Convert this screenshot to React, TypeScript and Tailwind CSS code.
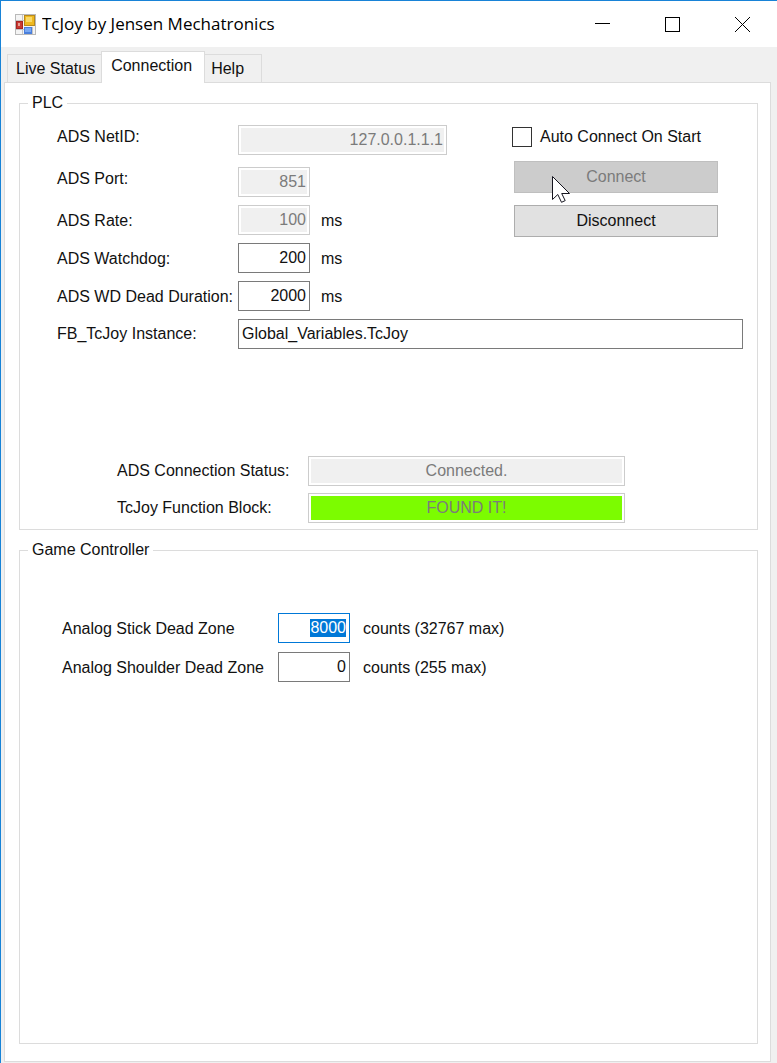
import { useEffect, useRef } from "react";
import type { InputHTMLAttributes, ReactNode, Ref } from "react";
import clsx from "clsx";

type FieldProps = InputHTMLAttributes<HTMLInputElement> & { ref?: Ref<HTMLInputElement> };

function Field({ className, ref, ...rest }: FieldProps) {
  return (
    <input
      ref={ref}
      type="text"
      className={clsx(
        "h-[30px] rounded-none border border-[#7a7a7a] bg-white px-[3px] text-base text-[#111] outline-none",
        "selection:bg-[#0078d7] selection:text-white focus:border-[#0078d7]",
        "disabled:border-[#cccccc] disabled:text-[#7b7b7b] disabled:shadow-[inset_0_0_0_2px_#ffffff]",
        className,
      )}
      {...rest}
    />
  );
}

function GroupBox({ title, className, children }: { title: string; className?: string; children: ReactNode }) {
  return (
    <fieldset className={clsx("min-w-0 border border-[#dcdcdc]", className)}>
      <legend className="ml-2 h-6 px-1 leading-6">{title}</legend>
      {children}
    </fieldset>
  );
}

type RowProps = { id: string; label: string; value: string; unit?: string; disabled?: boolean; wide?: boolean };

function PlcRow({ id, label, value, unit, disabled, wide }: RowProps) {
  return (
    <div className="flex items-center">
      <label
        htmlFor={id}
        className={clsx("w-[181px] shrink-0 whitespace-nowrap", unit ? "pt-[2px]" : "pb-[6px]")}
      >
        {label}
      </label>
      <Field
        id={id}
        defaultValue={value}
        disabled={disabled}
        className={clsx("text-right disabled:bg-[#f0f0f0]", wide ? "w-[209px]" : "w-[72px]")}
      />
      {unit && <span className="ml-[11px] pt-[2px]">{unit}</span>}
    </div>
  );
}

function AppIcon() {
  return (
    <svg width="21" height="21" viewBox="0 0 21 21" aria-hidden="true">
      <rect x="0.5" y="0.5" width="20" height="20" fill="#f4f4f4" stroke="#b9b9b9" />
      <path d="M1 6.500h8M7.500 1v19M1 15.500h8M17.500 13v7" stroke="#c4c4c4" fill="none" />
      <rect x="9" y="1" width="11" height="11" fill="#b98a1c" />
      <rect x="10" y="2" width="9" height="9" fill="#efb920" />
      <rect x="11" y="3" width="6" height="5" fill="#f9d968" />
      <rect x="1" y="7" width="7" height="8" fill="#a82424" />
      <rect x="2" y="8" width="5" height="6" fill="#c93a30" />
      <rect x="3" y="9" width="2" height="3" fill="#e8a096" />
      <rect x="9" y="13" width="8" height="7" fill="#4a7fdc" />
      <rect x="10" y="14" width="6" height="4" fill="#79a8f2" />
    </svg>
  );
}

function Pointer() {
  return (
    <svg
      className="pointer-events-none absolute left-[38px] top-[15px]"
      width="19"
      height="28"
      viewBox="0 0 19 28"
      aria-hidden="true"
    >
      <path
        d="M0.500 0.500V23.500L5.800 18.500L9.500 26.300L13.200 24.600L9.700 17.500H17.500Z"
        fill="#ffffff"
        stroke="#15151f"
      />
    </svg>
  );
}

export default function App() {
  const stick = useRef<HTMLInputElement>(null);

  useEffect(() => {
    stick.current?.focus();
    stick.current?.select();
  }, []);

  return (
    <div className="flex min-h-screen flex-col border-l border-t border-[#1883d7] bg-[#f0f0f0] pb-px font-['Liberation_Sans',Arial,sans-serif] text-base leading-5 text-[#111]">
      <header className="flex h-[46px] items-stretch bg-white">
        <div className="flex min-w-0 flex-1 items-center gap-[6px] pl-[14px]">
          <AppIcon />
          <h1 className="truncate font-['Open_Sans','Noto_Sans',sans-serif] text-[17px] leading-6 text-black">
            TcJoy by Jensen Mechatronics
          </h1>
        </div>
        <button type="button" aria-label="Minimize" className="flex w-[70px] items-center justify-center">
          <svg width="15" height="15" viewBox="0 0 15 15" fill="none" stroke="#000">
            <path d="M0 6.500H15" />
          </svg>
        </button>
        <button type="button" aria-label="Maximize" className="flex w-[70px] items-center justify-center">
          <svg width="15" height="15" viewBox="0 0 15 15" fill="none" stroke="#000">
            <rect x="0.500" y="0.500" width="14" height="14" />
          </svg>
        </button>
        <button type="button" aria-label="Close" className="flex w-[70px] items-center justify-center">
          <svg width="15" height="15" viewBox="0 0 15 15" fill="none" stroke="#000">
            <path d="M0 0L15 15M15 0L0 15" />
          </svg>
        </button>
      </header>

      <div role="tablist" className="flex items-end pl-[6px] pt-1">
        <button
          type="button"
          role="tab"
          aria-selected="false"
          className="h-7 border border-b-0 border-r-0 border-[#dcdcdc] pl-2 pr-[6px]"
        >
          Live Status
        </button>
        <button
          type="button"
          role="tab"
          aria-selected="true"
          className="relative z-10 -mb-px h-8 w-[104px] border border-b-0 border-[#dcdcdc] bg-white pb-[3px] pl-[9px] text-left"
        >
          Connection
        </button>
        <button
          type="button"
          role="tab"
          aria-selected="false"
          className="h-7 w-[57px] border border-b-0 border-l-0 border-[#dcdcdc] px-[6px] text-left"
        >
          Help
        </button>
      </div>

      <main
        role="tabpanel"
        className="ml-[3px] mr-[6px] flex flex-1 flex-col gap-2 border border-[#dcdcdc] bg-white pb-[17px] pl-[14px] pr-3 pt-2"
      >
        <GroupBox title="PLC" className="pb-[6px]">
          <div className="flex flex-wrap justify-between gap-y-2 pl-[37px] pr-[39px] pt-[10px]">
            <div className="flex flex-col gap-2">
              <div className="flex flex-col gap-3">
                <PlcRow id="netid" label="ADS NetID:" value="127.0.0.1.1.1" disabled wide />
                <PlcRow id="port" label="ADS Port:" value="851" disabled />
              </div>
              <PlcRow id="rate" label="ADS Rate:" value="100" unit="ms" disabled />
              <PlcRow id="watchdog" label="ADS Watchdog:" value="200" unit="ms" />
              <PlcRow id="dead" label="ADS WD Dead Duration:" value="2000" unit="ms" />
            </div>
            <div className="flex w-[206px] flex-col gap-3">
              <label className="flex h-6 items-center gap-2 whitespace-nowrap">
                <input
                  type="checkbox"
                  className="size-5 shrink-0 appearance-none border border-[#333] bg-white checked:bg-[#0078d7]"
                />
                Auto Connect On Start
              </label>
              <div className="relative ml-[2px] flex">
                <button
                  type="button"
                  disabled
                  className="h-8 flex-1 border border-[#bfbfbf] bg-[#cccccc] text-[#7b7b7b]"
                >
                  Connect
                </button>
                <Pointer />
              </div>
              <button type="button" className="ml-[2px] h-8 border border-[#adadad] bg-[#e1e1e1]">
                Disconnect
              </button>
            </div>
          </div>
          <div className="flex items-center pl-[37px] pr-[14px] pt-2">
            <label htmlFor="instance" className="w-[181px] shrink-0">
              FB_TcJoy Instance:
            </label>
            <Field id="instance" defaultValue="Global_Variables.TcJoy" className="min-w-0 flex-1" />
          </div>

          <div className="mt-[107px] flex flex-col gap-[7px] pl-[97px]">
            <div className="flex items-center">
              <label htmlFor="status" className="w-[191px] shrink-0">
                ADS Connection Status:
              </label>
              <Field
                id="status"
                defaultValue="Connected."
                disabled
                className="w-[317px] text-center disabled:bg-[#f0f0f0]"
              />
            </div>
            <div className="flex items-center">
              <label htmlFor="block" className="w-[191px] shrink-0">
                TcJoy Function Block:
              </label>
              <Field
                id="block"
                defaultValue="FOUND IT!"
                disabled
                className="w-[317px] text-center disabled:bg-[#7cfc00]"
              />
            </div>
          </div>
        </GroupBox>

        <GroupBox title="Game Controller" className="flex-1">
          <div className="flex flex-col gap-[9px] pl-[42px] pt-[51px]">
            <div className="flex items-center">
              <label htmlFor="stick" className="w-[216px] shrink-0 pt-[2px]">
                Analog Stick Dead Zone
              </label>
              <Field id="stick" ref={stick} defaultValue="8000" className="w-[72px] text-right" />
              <span className="ml-[13px] pt-[2px]">counts (32767 max)</span>
            </div>
            <div className="flex items-center">
              <label htmlFor="shoulder" className="w-[216px] shrink-0 pt-[2px]">
                Analog Shoulder Dead Zone
              </label>
              <Field id="shoulder" defaultValue="0" className="w-[72px] text-right" />
              <span className="ml-[13px] pt-[2px]">counts (255 max)</span>
            </div>
          </div>
        </GroupBox>
      </main>
    </div>
  );
}
